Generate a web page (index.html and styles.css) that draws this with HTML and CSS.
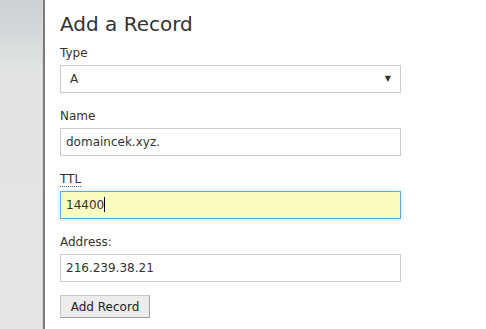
FILE: index.html
```html
<!DOCTYPE html>
<html lang="en">
<head>
    <meta charset="UTF-8">
    <title>Add a Record</title>
    <link rel="stylesheet" href="styles.css">
</head>
<body>
    <div id="page">
        <div id="sidebar"></div>
        <div id="content">
            <h2 class="title">Add a Record</h2>
            <form class="recordForm">
                <label class="fieldLabel">Type</label>
                <div class="selectBox">
                    <span>A</span>
                    <span class="arrow">&#9660;</span>
                </div>

                <label class="fieldLabel">Name</label>
                <div class="textBox">domaincek.xyz.</div>

                <label class="fieldLabel"><abbr title="Time to live">TTL</abbr></label>
                <div class="textBox focused">14400<span class="caret"></span></div>

                <label class="fieldLabel">Address:</label>
                <div class="textBox">216.239.38.21</div>

                <div class="buttonRow">
                    <button type="button" class="submitBtn">Add Record</button>
                </div>
            </form>
        </div>
    </div>
</body>
</html>
```

FILE: styles.css
```css
body{
    margin: 0;
    padding: 0;
    background-color: #ffffff;
    font-family: 'DejaVu Sans', Verdana, sans-serif;
    color: #333333;
    overflow: hidden;
}

#page{
    display: flex;
    height: 329px;
}

#sidebar{
    width: 42px;
    background: linear-gradient(to bottom, #cbd0d2 0px, #e2e3e3 70px, #e6e6e6 100%);
    border-right: 1px solid #d8d8d8;
}

#content{
    border-left: 2px solid #7a7a7a;
    padding: 12px 0 0 15px;
    flex: 1;
}

.title{
    margin: 0 0 10px 0;
    font-size: 20px;
    font-weight: normal;
    color: #333333;
    line-height: 24px;
}

.recordForm{
    display: flex;
    flex-direction: column;
    width: 341px;
}

.fieldLabel{
    font-size: 12px;
    line-height: 15px;
    color: #333333;
    margin-bottom: 4px;
}

abbr{
    text-decoration: none;
    border-bottom: 1px dotted #555555;
}

.selectBox, .textBox{
    box-sizing: border-box;
    height: 28px;
    border: 1px solid #cccccc;
    padding: 0 5px;
    font-size: 12px;
    line-height: 26px;
    margin-bottom: 16px;
    background-color: #ffffff;
}

.selectBox{
    display: flex;
    justify-content: space-between;
    padding: 0 9px;
}

.arrow{
    font-size: 8px;
    color: #333333;
}

.textBox.focused{
    background-color: #fafdc2;
    border-color: #62a9e8;
    box-shadow: 0 0 6px rgba(102, 175, 233, 0.35);
}

.caret{
    display: inline-block;
    width: 1px;
    height: 15px;
    background-color: #000000;
    vertical-align: -3px;
}

.buttonRow{
    display: flex;
    margin-top: -3px;
}

.submitBtn{
    font-family: 'DejaVu Sans', Verdana, sans-serif;
    font-size: 12px;
    height: 23px;
    width: 90px;
    padding: 0;
    background-color: #ececec;
    border: 1px solid #c8c8c8;
    border-right-color: #a0a0a0;
    border-bottom-color: #a0a0a0;
    color: #222222;
}
```
